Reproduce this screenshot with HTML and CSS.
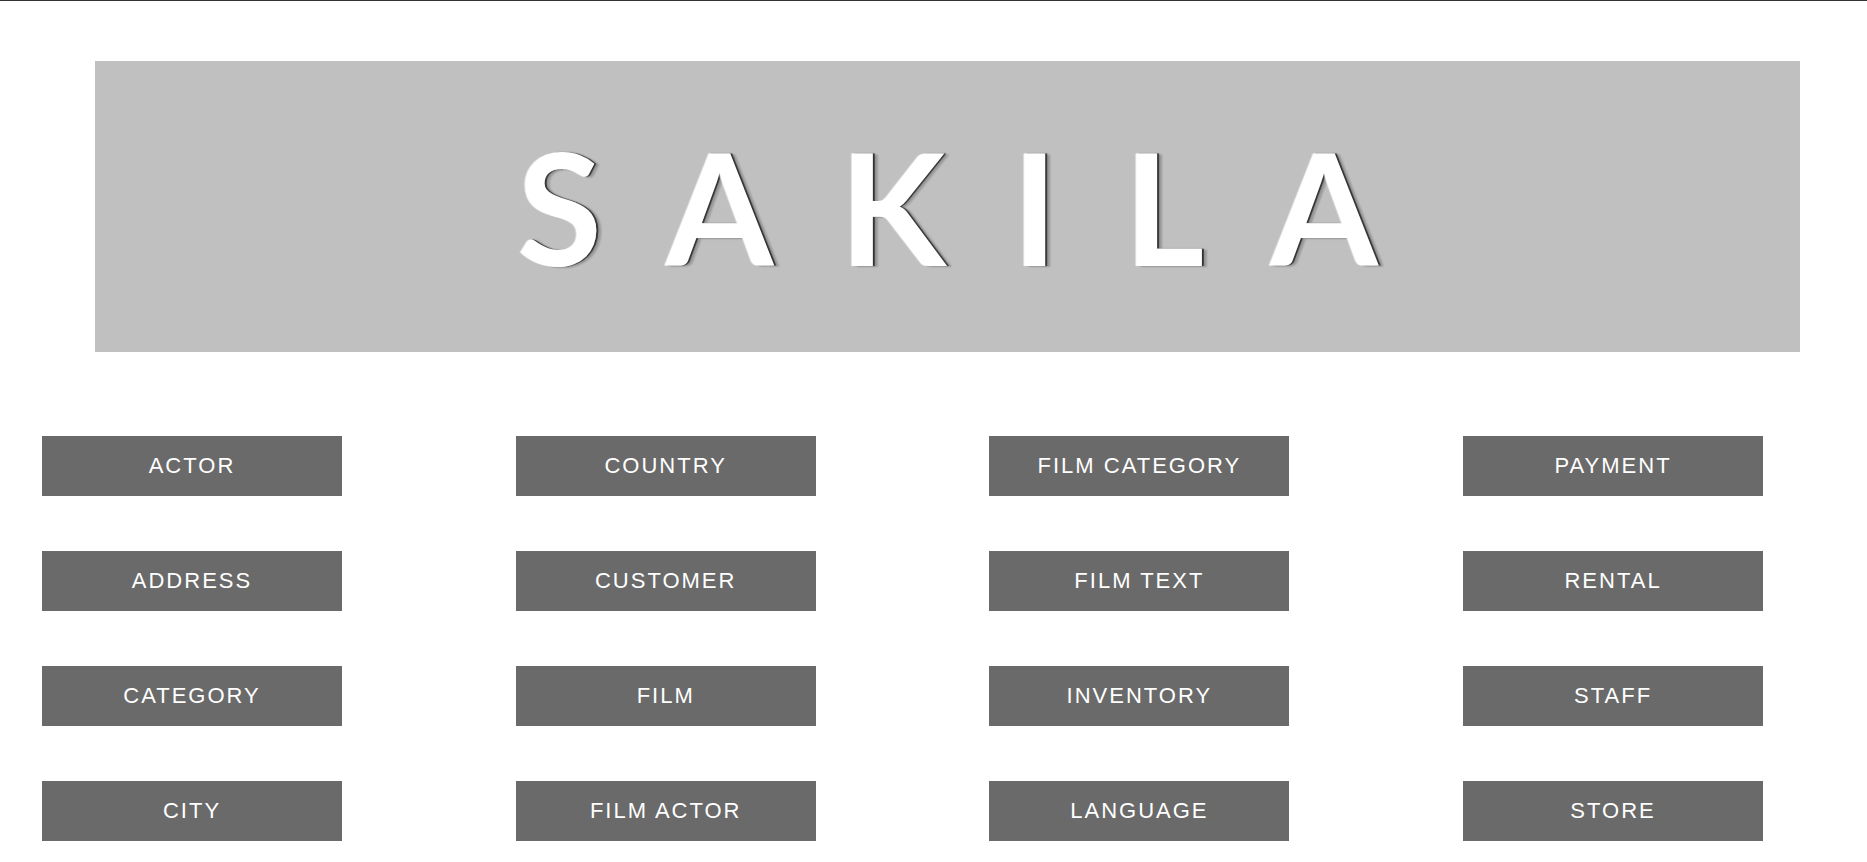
FILE: index.html
```html
<!DOCTYPE html>
<html>
<head>
<meta charset="utf-8">
<link rel="stylesheet" href="styles.css">
<title>Sakila</title>
</head>
<body>
<div class="page">
  <header class="banner">
    <h1 class="title">SAKILA</h1>
  </header>
  <nav class="grid">
    <a class="btn" href="#">ACTOR</a>
    <a class="btn" href="#">COUNTRY</a>
    <a class="btn" href="#">FILM CATEGORY</a>
    <a class="btn" href="#">PAYMENT</a>
    <a class="btn" href="#">ADDRESS</a>
    <a class="btn" href="#">CUSTOMER</a>
    <a class="btn" href="#">FILM TEXT</a>
    <a class="btn" href="#">RENTAL</a>
    <a class="btn" href="#">CATEGORY</a>
    <a class="btn" href="#">FILM</a>
    <a class="btn" href="#">INVENTORY</a>
    <a class="btn" href="#">STAFF</a>
    <a class="btn" href="#">CITY</a>
    <a class="btn" href="#">FILM ACTOR</a>
    <a class="btn" href="#">LANGUAGE</a>
    <a class="btn" href="#">STORE</a>
  </nav>
</div>
</body>
</html>
```

FILE: styles.css
```css
html, body {
  margin: 0;
  padding: 0;
  background: #ffffff;
}
body {
  border-top: 1px solid #333333;
  font-family: "Liberation Sans", Arial, sans-serif;
}
.page {
  padding-top: 60px;
}
.banner {
  margin-left: 95px;
  width: 1705px;
  height: 291px;
  background: #c0c0c0;
  display: flex;
  align-items: center;
  justify-content: center;
}
.title {
  margin: 0 -66px 0 0;
  font-family: Lato, "Noto Sans", sans-serif;
  font-weight: 700;
  font-size: 155px;
  line-height: 1;
  color: #ffffff;
  letter-spacing: 66px;
  text-shadow: -1px 0 1px rgba(255, 255, 255, 0.6), 2px 0 1px #333333, 5px 1px 2px rgba(0, 0, 0, 0.2);
}
.grid {
  margin-top: 84px;
  padding-left: 42px;
  display: grid;
  grid-template-columns: repeat(4, 300px);
  column-gap: 173.7px;
  row-gap: 55px;
}
.btn {
  height: 60px;
  background: #6a6a6a;
  color: #ffffff;
  text-decoration: none;
  font-size: 22px;
  letter-spacing: 2px;
  display: flex;
  align-items: center;
  justify-content: center;
}
```
